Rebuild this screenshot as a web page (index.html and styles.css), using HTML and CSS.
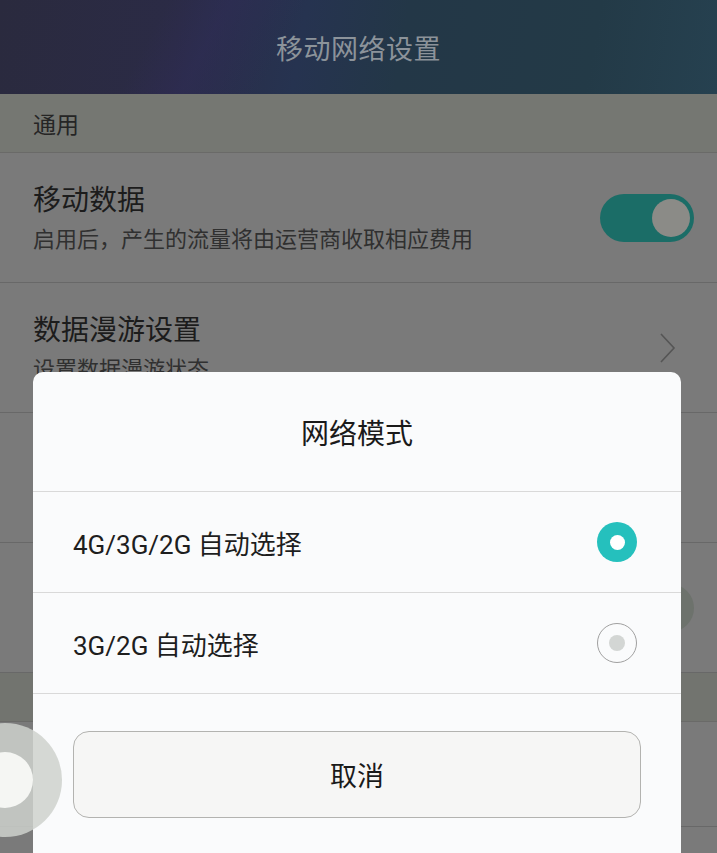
FILE: index.html
```html
<!DOCTYPE html>
<html lang="zh">
<head>
<meta charset="utf-8">
<link rel="stylesheet" href="styles.css">
</head>
<body>
<div class="screen">
  <header class="topbar"><span class="topbar-title">移动网络设置</span></header>
  <div class="section">通用</div>
  <div class="row">
    <div class="row-text">
      <div class="row-title">移动数据</div>
      <div class="row-sub">启用后，产生的流量将由运营商收取相应费用</div>
    </div>
    <div class="toggle on"><span class="knob"></span></div>
  </div>
  <div class="row">
    <div class="row-text">
      <div class="row-title">数据漫游设置</div>
      <div class="row-sub">设置数据漫游状态</div>
    </div>
    <svg class="chevron" width="18" height="30" viewBox="0 0 18 30"><polyline points="2,1 15,15 2,29" fill="none" stroke="#555" stroke-width="1.6"/></svg>
  </div>
  <div class="row"></div>
  <div class="row">
    <div class="row-text"></div>
    <div class="toggle off"><span class="knob"></span></div>
  </div>
  <div class="section short"></div>
  <div class="row short"></div>
  <div class="row short"></div>

  <div class="dialog">
    <div class="dialog-title">网络模式</div>
    <div class="option">
      <span class="option-label">4G/3G/2G 自动选择</span>
      <span class="radio checked"></span>
    </div>
    <div class="option">
      <span class="option-label">3G/2G 自动选择</span>
      <span class="radio"></span>
    </div>
    <div class="dialog-actions">
      <div class="btn">取消</div>
    </div>
  </div>

  <div class="float-ball"><span class="float-core"></span></div>
</div>
</body>
</html>
```

FILE: styles.css
```css
html, body {
  margin: 0;
  padding: 0;
}
body {
  font-family: "Noto Sans CJK SC", "Noto Sans", sans-serif;
  background: #7a7a7a;
}
.screen {
  position: relative;
  width: 717px;
  height: 853px;
  overflow: hidden;
  background: #7a7a7a;
}
.topbar {
  height: 94px;
  display: flex;
  align-items: center;
  justify-content: center;
  background:
    linear-gradient(118deg, rgba(0,0,0,0) 0%, rgba(0,0,0,0) 22%, rgba(48,44,90,0.45) 30%, rgba(0,0,0,0) 40%),
    linear-gradient(100deg, #2a2a3e 0%, #2b2b46 25%, #263350 42%, #233747 56%, #233a47 82%, #264150 100%);
}
.topbar-title {
  color: #8c939a;
  font-size: 27px;
  letter-spacing: 0.5px;
}
.section {
  height: 58px;
  border-bottom: 1px solid #6a6a68;
  background: #757772;
  padding-left: 33px;
  display: flex;
  align-items: center;
  font-size: 23px;
  color: #252525;
}
.section.short {
  height: 48px;
  background: #72746f;
}
.row {
  height: 129px;
  border-bottom: 1px solid #686868;
  display: flex;
  align-items: center;
  justify-content: space-between;
  padding: 0 23px 0 33px;
  box-sizing: content-box;
}
.row.short {
  height: 104px;
}
.row-text {
  display: flex;
  flex-direction: column;
  gap: 5px;
  margin-top: -2px;
}
.row-title {
  font-size: 28px;
  line-height: 36px;
  color: #1c1c1c;
}
.row-sub {
  font-size: 22px;
  line-height: 32px;
  color: #303030;
}
.toggle {
  width: 94px;
  height: 48px;
  border-radius: 24px;
  position: relative;
}
.toggle.on {
  background: #1b6d67;
}
.toggle.off {
  background: #6d726c;
}
.toggle .knob {
  position: absolute;
  top: 5px;
  width: 38px;
  height: 38px;
  border-radius: 50%;
  background: #8b8b87;
}
.toggle.on .knob {
  right: 4px;
}
.toggle.off .knob {
  left: 5px;
}
.chevron {
  margin-right: 17px;
}
.dialog {
  position: absolute;
  left: 33px;
  top: 372px;
  width: 648px;
  height: 500px;
  background: #fafbfc;
  border-radius: 10px;
}
.dialog-title {
  height: 120px;
  border-bottom: 1px solid #d9d9d9;
  display: flex;
  align-items: center;
  justify-content: center;
  font-size: 28px;
  color: #1a1a1a;
  box-sizing: border-box;
}
.option {
  height: 101px;
  box-sizing: border-box;
  border-bottom: 1px solid #d9d9d9;
  display: flex;
  align-items: center;
  justify-content: space-between;
  padding: 0 44px 0 40px;
}
.option-label {
  font-family: Roboto, "Noto Sans CJK SC", sans-serif;
  font-size: 26px;
  color: #1e1e1e;
}
.radio {
  width: 40px;
  height: 40px;
  border-radius: 50%;
  box-sizing: border-box;
  border: 1px solid #a0a0a0;
  display: flex;
  align-items: center;
  justify-content: center;
  background: #fafbfc;
}
.radio::after {
  content: "";
  width: 16px;
  height: 16px;
  border-radius: 50%;
  background: #d3d6d4;
}
.radio.checked {
  border: none;
  background: #25c0bd;
}
.radio.checked::after {
  width: 15px;
  height: 15px;
  background: #ffffff;
}
.dialog-actions {
  padding: 37px 40px 0 40px;
}
.btn {
  height: 87px;
  box-sizing: border-box;
  border: 1px solid #b3b3b0;
  border-radius: 16px;
  background: #f6f6f5;
  display: flex;
  align-items: center;
  justify-content: center;
  font-size: 27px;
  color: #1a1a1a;
}
.float-ball {
  position: absolute;
  left: -52px;
  top: 723px;
  width: 114px;
  height: 114px;
  border-radius: 50%;
  background: rgba(206, 209, 205, 0.85);
  display: flex;
  align-items: center;
  justify-content: center;
}
.float-core {
  width: 56px;
  height: 56px;
  border-radius: 50%;
  background: #f5f6f3;
}
```
